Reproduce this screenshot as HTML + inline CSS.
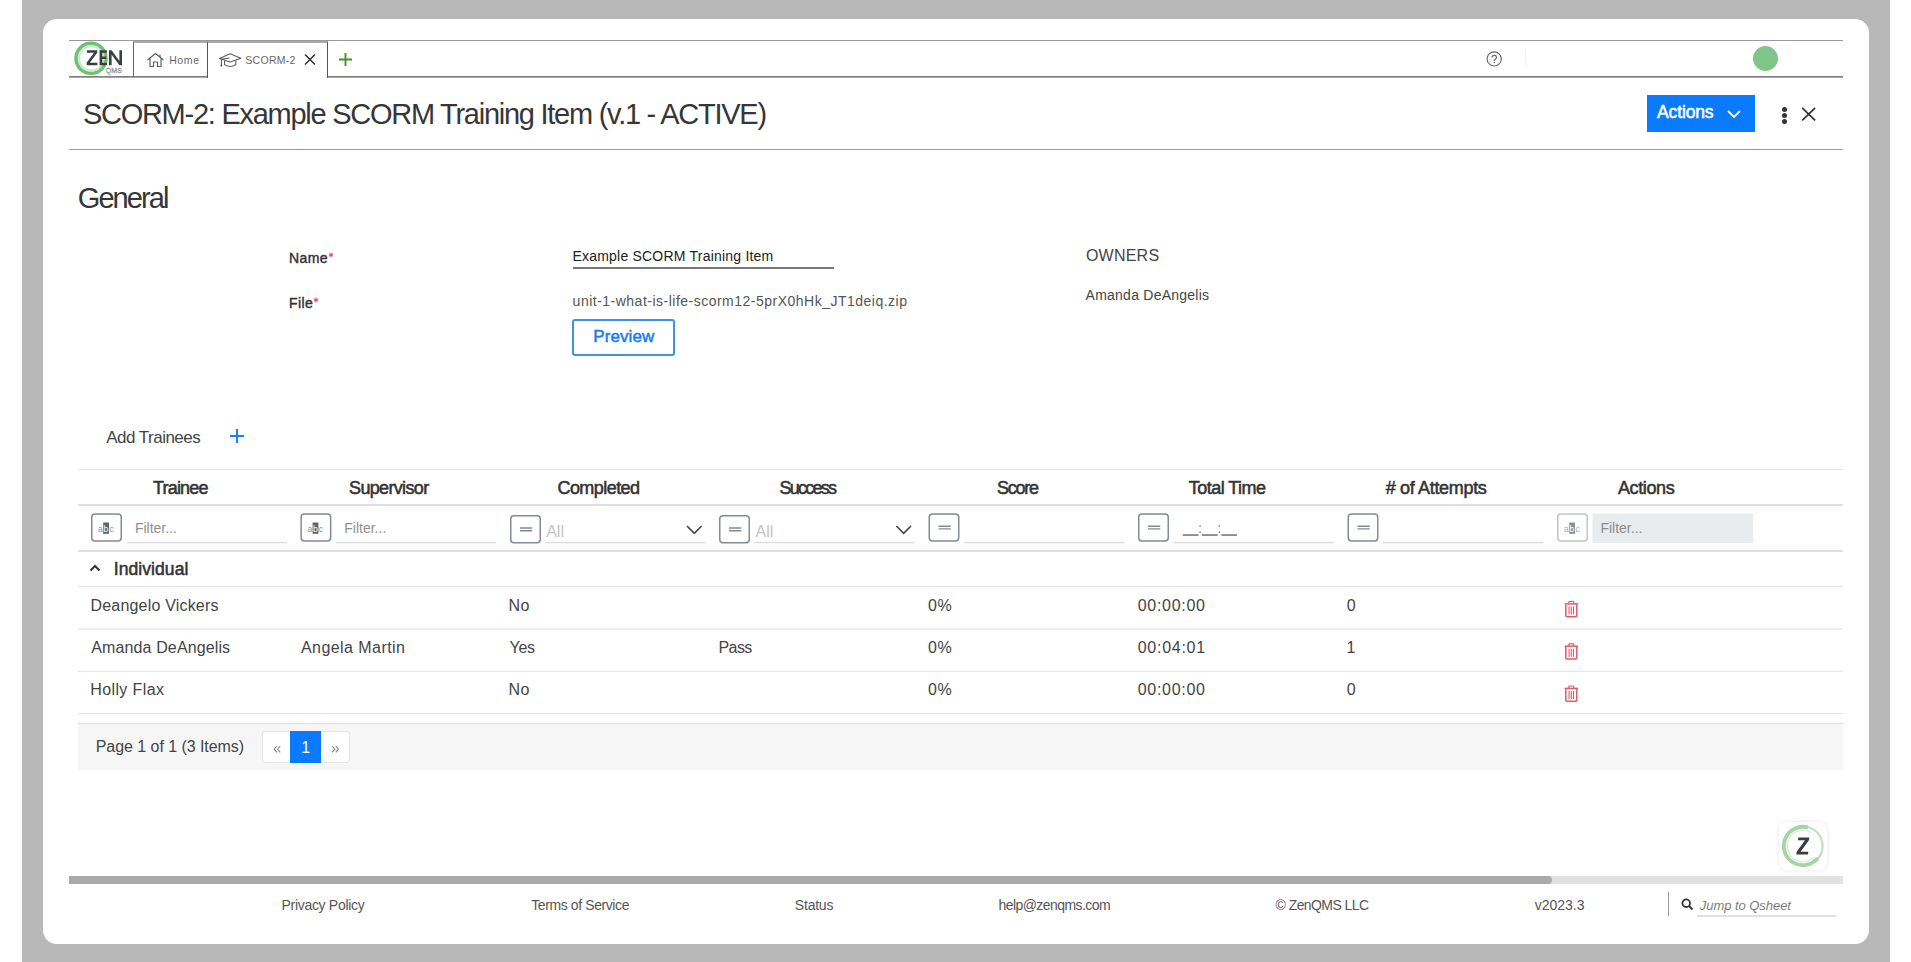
<!DOCTYPE html>
<html><head><meta charset="utf-8"><style>
html,body{margin:0;padding:0;width:1911px;height:962px;overflow:hidden;background:#fff;}
body{position:relative;font-family:"Liberation Sans",sans-serif;}
.t{position:absolute;line-height:1;white-space:nowrap;}
.a{position:absolute;}
</style></head><body>
<!-- outer background -->
<div class="a" style="left:22px;top:0;width:1868px;height:962px;background:#b8b8b8;"></div>
<div class="a" style="left:43px;top:19px;width:1826px;height:925px;background:#fff;border-radius:14px;"></div>
<!-- top bar lines -->
<div class="a" style="left:69px;top:40px;width:1774px;height:1px;background:#9a9a9a;"></div>
<div class="a" style="left:69px;top:76px;width:1774px;height:1px;background:#808080;"></div>
<div class="a" style="left:69px;top:77px;width:1774px;height:1px;background:#a6a6a6;"></div>
<!-- tabs -->
<div class="a" style="left:133px;top:41px;width:74px;height:36px;border-top:2px solid #aaa;border-left:1px solid #666;box-sizing:border-box;"></div>
<div class="a" style="left:207px;top:41px;width:121px;height:37px;background:#fff;border-top:2px solid #aaa;border-left:1px solid #555;border-right:1px solid #555;box-sizing:border-box;"></div>
<!-- logo -->
<svg class="a" style="left:68px;top:38px" width="64" height="40" viewBox="0 0 64 40">
  <circle cx="23" cy="20.3" r="15" fill="none" stroke="#6dc173" stroke-width="3.5"/>
  <circle cx="23.3" cy="20.3" r="12.2" fill="none" stroke="#c9e8c9" stroke-width="2.2"/>
  <g fill="#3b3f42">
    <path d="M18.9,12.3 H29.2 V14.7 L21.8,24.7 H29.4 V27.2 H18.6 V24.8 L26,14.8 H18.9 Z"/>
    <path d="M31.6,12.3 H38.9 V14.7 H34.2 V18.5 H38.3 V20.9 H34.2 V24.8 H38.9 V27.2 H31.6 Z"/>
    <path d="M41,27.2 V12.3 H43.6 L51.4,23 V12.3 H54 V27.2 H51.4 L43.6,16.5 V27.2 Z"/>
  </g>
  <text x="37.8" y="34.9" font-family="Liberation Sans" font-size="8" fill="none" stroke="#8a8a8a" stroke-width="0.45" textLength="16.2" lengthAdjust="spacingAndGlyphs">QMS</text>
</svg>
<!-- home icon -->
<svg class="a" style="left:146px;top:52px" width="19" height="16" viewBox="0 0 19 16">
  <path d="M1.5 8 L9.5 1.5 L17.5 8 M4 6 V14.5 H7.5 V10 H11.5 V14.5 H15 V6" fill="none" stroke="#5a5a5a" stroke-width="1.1" stroke-linejoin="round"/>
  <path d="M14 2.5 V5" stroke="#5a5a5a" stroke-width="1.1"/>
</svg>
<!-- scorm cap icon -->
<svg class="a" style="left:218px;top:52px" width="24" height="17" viewBox="0 0 24 17">
  <path d="M1.4 6.4 L12.1 1.8 L22.8 6.2 L12.1 10 Z" fill="none" stroke="#5f5f5f" stroke-width="1.1" stroke-linejoin="round"/>
  <path d="M6.6 8.3 V12.6 Q12.1 16.4 17.8 12.6 V8.3" fill="none" stroke="#5f5f5f" stroke-width="1.1"/>
  <path d="M11.5 6 L3.4 7.2 V13.6" fill="none" stroke="#5f5f5f" stroke-width="1.1"/>
  <circle cx="3.4" cy="13.6" r="0.9" fill="#444"/>
</svg>
<!-- tab close X -->
<svg class="a" style="left:304px;top:54px" width="12" height="11" viewBox="0 0 12 11">
  <path d="M1 0.5 L11 10.5 M11 0.5 L1 10.5" stroke="#333" stroke-width="1.5"/>
</svg>
<!-- plus -->
<svg class="a" style="left:338px;top:52px" width="15" height="15" viewBox="0 0 15 15">
  <path d="M7.5 1 V14 M1 7.5 H14" stroke="#4d8d2d" stroke-width="1.9"/>
</svg>
<!-- help icon -->
<svg class="a" style="left:1485px;top:50px" width="18" height="18" viewBox="0 0 18 18">
  <circle cx="9.2" cy="8.9" r="7.1" fill="none" stroke="#6a6a6a" stroke-width="1.15"/>
  <path d="M7 7.5 Q7 5.4 9.2 5.4 Q11.5 5.4 11.5 7.3 Q11.5 8.5 10 9.4 Q9.2 9.9 9.2 11" fill="none" stroke="#6a6a6a" stroke-width="1.15"/>
  <circle cx="9.2" cy="12.6" r="0.75" fill="#6a6a6a"/>
</svg>
<div class="a" style="left:1525px;top:50px;width:1px;height:17px;background:#f0f0f0;"></div>
<!-- green avatar -->
<div class="a" style="left:1753px;top:46px;width:25px;height:25px;border-radius:50%;background:#80c68a;"></div>
<!-- header line -->
<div class="a" style="left:69px;top:149px;width:1774px;height:1px;background:#9a9a9a;"></div>
<!-- actions button -->
<div class="a" style="left:1647px;top:95px;width:108px;height:37px;background:#0a7bff;"></div>
<svg class="a" style="left:1726px;top:108px" width="16" height="12" viewBox="0 0 16 12">
  <path d="M2 3 L8 9 L14 3" fill="none" stroke="#fff" stroke-width="1.8"/>
</svg>
<!-- kebab -->
<div class="a" style="left:1782px;top:106.5px;width:5px;height:5px;border-radius:50%;background:#333;"></div>
<div class="a" style="left:1782px;top:112.5px;width:5px;height:5px;border-radius:50%;background:#333;"></div>
<div class="a" style="left:1782px;top:119px;width:5px;height:5px;border-radius:50%;background:#333;"></div>
<svg class="a" style="left:1800px;top:106px" width="17" height="16" viewBox="0 0 17 16">
  <path d="M2.2 1.8 L15.1 14.3 M15.1 1.8 L2.2 14.3" stroke="#333" stroke-width="1.7"/>
</svg>
<!-- name underline -->
<div class="a" style="left:573px;top:267px;width:261px;height:2px;background:#777;"></div>
<!-- required asterisks -->
<svg class="a" style="left:328px;top:252px" width="6" height="6" viewBox="0 0 6 6"><path d="M3 0.5V5.5M0.8 1.8L5.2 4.2M5.2 1.8L0.8 4.2" stroke="#e0405a" stroke-width="1"/></svg>
<svg class="a" style="left:313px;top:297px" width="6" height="6" viewBox="0 0 6 6"><path d="M3 0.5V5.5M0.8 1.8L5.2 4.2M5.2 1.8L0.8 4.2" stroke="#e0405a" stroke-width="1"/></svg>
<!-- preview button -->
<div class="a" style="left:572px;top:319px;width:103px;height:37px;border:2px solid #3f8ef5;border-radius:3px;box-sizing:border-box;"></div>
<!-- add trainees plus -->
<svg class="a" style="left:229px;top:428px" width="16" height="16" viewBox="0 0 16 16">
  <path d="M8 1 V15 M1 8 H15" stroke="#1a7fff" stroke-width="2"/>
</svg>
<!-- table lines -->
<div class="a" style="left:78px;top:469px;width:1765px;height:1px;background:#e3e6ea;"></div>
<div class="a" style="left:78px;top:504px;width:1765px;height:2px;background:#dcdfe3;"></div>
<div class="a" style="left:78px;top:550px;width:1765px;height:2px;background:#dcdfe3;"></div>
<svg class="a" style="left:0;top:0" width="1911" height="962"><g fill="#e1e4e8">
<rect x="78" y="586.1" width="1765" height="1.1"/><rect x="78" y="628.4" width="1765" height="1.1"/><rect x="78" y="670.7" width="1765" height="1.1"/><rect x="78" y="713" width="1765" height="1.1"/></g></svg>
<!-- pager bar -->
<div class="a" style="left:78px;top:723px;width:1765px;height:47px;background:#f6f6f7;border-top:1px solid #dedede;box-sizing:border-box;"></div>
<div class="a" style="left:262px;top:731px;width:88px;height:32px;background:#fff;border:1px solid #e3e5e8;border-radius:3px;box-sizing:border-box;"></div>
<div class="a" style="left:290px;top:731px;width:31px;height:32px;background:#0a7bff;"></div>
<svg class="a" style="left:0;top:0" width="1911" height="962"><path d="M276.8,746 L274.2,749.2 L276.8,752.4 M280.2,746 L277.6,749.2 L280.2,752.4 M332.2,746 L334.8,749.2 L332.2,752.4 M335.8,746 L338.4,749.2 L335.8,752.4" fill="none" stroke="#808080" stroke-width="1.05"/></svg>
<div class="t" style="left:301.3px;top:739.5px;font-size:16px;color:#fff;">1</div>
<!-- group caret -->
<svg class="a" style="left:89px;top:563px" width="12" height="9" viewBox="0 0 12 9">
  <path d="M1.5 7.5 L6 3 L10.5 7.5" fill="none" stroke="#333" stroke-width="2"/>
</svg>
<!-- scrollbar -->
<div class="a" style="left:69px;top:876px;width:1774px;height:8px;background:#e2e2e2;"></div>
<div class="a" style="left:69px;top:876px;width:1483px;height:8px;background:#a9a9a9;border-radius:0 4px 4px 0;"></div>
<!-- footer divider & search -->
<div class="a" style="left:1668px;top:892px;width:1px;height:24px;background:#999;"></div>
<svg class="a" style="left:1681px;top:898px" width="13" height="13" viewBox="0 0 13 13">
  <circle cx="5.2" cy="5.2" r="3.8" fill="none" stroke="#333" stroke-width="1.8"/>
  <path d="M8 8 L11.5 11.5" stroke="#333" stroke-width="2"/>
</svg>
<div class="a" style="left:1697px;top:915px;width:139px;height:2px;background:#e0e0e0;"></div>
<!-- Z bubble -->
<div class="a" style="left:1779px;top:822px;width:48px;height:48px;border-radius:8px;background:#fff;box-shadow:0 0 5px rgba(0,0,0,0.10);"></div>
<svg class="a" style="left:0;top:0" width="1911" height="962">
  <circle cx="1803" cy="846" r="19.6" fill="none" stroke="#b8ddb8" stroke-width="2"/>
  <path d="M1807.97,827.45 A19.2,19.2 0 1 0 1817.71,858.34" fill="none" stroke="#a6d4a6" stroke-width="3.8"/>
  <path d="M1810.90,832.32 A15.8,15.8 0 1 0 1814.17,857.17" fill="none" stroke="#dcefdc" stroke-width="1.6"/>
  <path d="M1798.4,837.5 H1809.4 L1808.9,840.2 L1800.6,851.8 H1808.4 L1807.9,854.5 H1796.2 L1796.7,851.8 L1805,840.2 H1797.9 Z" fill="#3a3d40"/>
</svg>
<!-- filter row -->
<svg class="a" style="left:0;top:0" width="1911" height="962" viewBox="0 0 1911 962">
  <defs>
    <g id="abc">
      <rect x="0.75" y="0.75" width="29.5" height="27" rx="3.2" fill="#fff" stroke="#858b92" stroke-width="1.5"/>
      <rect x="12.2" y="9.3" width="5.8" height="11.3" fill="#5d636a"/>
      <text x="7.0" y="18.6" font-family="Liberation Sans" font-size="8.5" fill="#8a9096">a</text>
      <text x="12.6" y="18.6" font-family="Liberation Sans" font-size="8.5" fill="#fff">b</text>
      <text x="18.4" y="18.6" font-family="Liberation Sans" font-size="8.5" fill="#8a9096">c</text>
    </g>
    <g id="abc2">
      <rect x="0.75" y="0.75" width="29.5" height="27" rx="3.2" fill="#fff" stroke="#c0c5ca" stroke-width="1.5"/>
      <rect x="12.2" y="9.3" width="5.8" height="11.3" fill="#8a8f95"/>
      <text x="7.0" y="18.6" font-family="Liberation Sans" font-size="8.5" fill="#a5aaaf">a</text>
      <text x="12.6" y="18.6" font-family="Liberation Sans" font-size="8.5" fill="#fff">b</text>
      <text x="18.4" y="18.6" font-family="Liberation Sans" font-size="8.5" fill="#a5aaaf">c</text>
    </g>
    <g id="eq">
      <rect x="0.75" y="0.75" width="29.5" height="27" rx="3.2" fill="#fff" stroke="#858b92" stroke-width="1.5"/>
      <path d="M10 13 H22.3 M10 15.7 H22.3" stroke="#858b92" stroke-width="1.4"/>
    </g>
    <g id="trash">
      <path d="M0.8 3.4 H14.2" stroke="#e25a68" stroke-width="1.5"/>
      <path d="M5 3 V1.6 Q5 1 5.6 1 H9.4 Q10 1 10 1.6 V3" fill="none" stroke="#e25a68" stroke-width="1.2"/>
      <path d="M2 4 V15 Q2 16.2 3.2 16.2 H11.8 Q13 16.2 13 15 V4" fill="none" stroke="#e25a68" stroke-width="1.5"/>
      <path d="M5.3 6 V14 M7.5 6 V14 M9.7 6 V14" stroke="#e25a68" stroke-width="1.1"/>
    </g>
  </defs>
  <use href="#abc" x="91" y="513.2"/>
  <use href="#abc" x="300.4" y="513.2"/>
  <use href="#eq" x="510" y="515"/>
  <use href="#eq" x="719" y="515"/>
  <use href="#eq" x="928.5" y="513.2"/>
  <use href="#eq" x="1138" y="513.2"/>
  <use href="#eq" x="1347.5" y="513.2"/>
  <use href="#abc2" x="1557" y="513.2"/>
  <!-- underlines -->
  <g fill="#dcdddf">
    <rect x="127" y="541.8" width="160" height="1.5"/>
    <rect x="336" y="541.8" width="160" height="1.5"/>
    <rect x="545.5" y="541.8" width="160" height="1.5"/>
    <rect x="754.5" y="541.8" width="160" height="1.5"/>
    <rect x="964" y="541.8" width="160.5" height="1.5"/>
    <rect x="1173.5" y="541.8" width="160.5" height="1.5"/>
    <rect x="1383" y="541.8" width="160.5" height="1.5"/>
  </g>
  <rect x="1592.5" y="513.5" width="160.5" height="29.5" fill="#e9ecef"/>
  <!-- chevrons -->
  <path d="M687 526 L694.3 533.3 L701.6 526" fill="none" stroke="#444" stroke-width="1.6"/>
  <path d="M896.4 526 L903.7 533.3 L911 526" fill="none" stroke="#444" stroke-width="1.6"/>
  <!-- time mask -->
  <g fill="#707070">
    <rect x="1182.8" y="534.3" width="15.7" height="1.5"/>
    <rect x="1201.8" y="534.3" width="15.9" height="1.5"/>
    <rect x="1221.3" y="534.3" width="15.6" height="1.5"/>
    <rect x="1199.4" y="525.3" width="1.4" height="1.4"/><rect x="1199.4" y="531.5" width="1.4" height="1.4"/>
    <rect x="1218.7" y="525.3" width="1.4" height="1.4"/><rect x="1218.7" y="531.5" width="1.4" height="1.4"/>
  </g>
  <use href="#trash" x="1563.8" y="600.5"/>
  <use href="#trash" x="1563.8" y="642.8"/>
  <use href="#trash" x="1563.8" y="685"/>
</svg>

<div class="t" style="left:82.89px;top:100.25px;font-size:29px;font-weight:400;color:#363636;font-style:normal;letter-spacing:-1.260px;">SCORM-2: Example SCORM Training Item (v.1 - ACTIVE)</div>
<div class="t" style="left:77.74px;top:183.75px;font-size:29px;font-weight:400;color:#363636;font-style:normal;letter-spacing:-1.900px;">General</div>
<div class="t" style="left:288.91px;top:250.85px;font-size:14px;font-weight:400;-webkit-text-stroke:0.42px #333;color:#333;font-style:normal;letter-spacing:0.460px;">Name</div>
<div class="t" style="left:288.91px;top:295.75px;font-size:14px;font-weight:400;-webkit-text-stroke:0.42px #333;color:#333;font-style:normal;letter-spacing:0.460px;">File</div>
<div class="t" style="left:572.41px;top:249.35px;font-size:14px;font-weight:400;color:#222;font-style:normal;letter-spacing:0.215px;">Example SCORM Training Item</div>
<div class="t" style="left:572.62px;top:294.05px;font-size:14px;font-weight:400;color:#555;font-style:normal;letter-spacing:0.492px;">unit-1-what-is-life-scorm12-5prX0hHk_JT1deiq.zip</div>
<div class="t" style="left:593.27px;top:328.11px;font-size:17px;font-weight:400;-webkit-text-stroke:0.51px #1a7bf0;color:#1a7bf0;font-style:normal;letter-spacing:0.091px;">Preview</div>
<div class="t" style="left:1085.95px;top:247.85px;font-size:16px;font-weight:400;color:#444;font-style:normal;letter-spacing:0.224px;">OWNERS</div>
<div class="t" style="left:1085.60px;top:288.25px;font-size:14px;font-weight:400;color:#444;font-style:normal;letter-spacing:0.239px;">Amanda DeAngelis</div>
<div class="t" style="left:106.30px;top:428.71px;font-size:17px;font-weight:400;color:#444;font-style:normal;letter-spacing:-0.523px;">Add Trainees</div>
<div class="t" style="left:153.02px;top:478.56px;font-size:18px;font-weight:400;-webkit-text-stroke:0.54px #333;color:#333;font-style:normal;letter-spacing:-0.815px;">Trainee</div>
<div class="t" style="left:349.04px;top:478.56px;font-size:18px;font-weight:400;-webkit-text-stroke:0.54px #333;color:#333;font-style:normal;letter-spacing:-0.658px;">Supervisor</div>
<div class="t" style="left:557.46px;top:478.56px;font-size:18px;font-weight:400;-webkit-text-stroke:0.54px #333;color:#333;font-style:normal;letter-spacing:-0.554px;">Completed</div>
<div class="t" style="left:779.44px;top:478.56px;font-size:18px;font-weight:400;-webkit-text-stroke:0.54px #333;color:#333;font-style:normal;letter-spacing:-1.740px;">Success</div>
<div class="t" style="left:996.94px;top:478.56px;font-size:18px;font-weight:400;-webkit-text-stroke:0.54px #333;color:#333;font-style:normal;letter-spacing:-1.267px;">Score</div>
<div class="t" style="left:1188.82px;top:478.56px;font-size:18px;font-weight:400;-webkit-text-stroke:0.54px #333;color:#333;font-style:normal;letter-spacing:-0.531px;">Total Time</div>
<div class="t" style="left:1385.70px;top:478.56px;font-size:18px;font-weight:400;-webkit-text-stroke:0.54px #333;color:#333;font-style:normal;letter-spacing:-0.327px;"># of Attempts</div>
<div class="t" style="left:1618.00px;top:478.56px;font-size:18px;font-weight:400;-webkit-text-stroke:0.54px #333;color:#333;font-style:normal;letter-spacing:-0.384px;">Actions</div>
<div class="t" style="left:113.83px;top:561.38px;font-size:17.5px;font-weight:400;-webkit-text-stroke:0.53px #333;color:#333;font-style:normal;letter-spacing:0.062px;">Individual</div>
<div class="t" style="left:90.45px;top:597.65px;font-size:16px;font-weight:400;color:#444;font-style:normal;letter-spacing:0.196px;">Deangelo Vickers</div>
<div class="t" style="left:508.45px;top:597.65px;font-size:16px;font-weight:400;color:#444;font-style:normal;letter-spacing:0.600px;">No</div>
<div class="t" style="left:928.10px;top:597.65px;font-size:16px;font-weight:400;color:#444;font-style:normal;letter-spacing:0.552px;">0%</div>
<div class="t" style="left:1137.70px;top:597.65px;font-size:16px;font-weight:400;color:#444;font-style:normal;letter-spacing:0.702px;">00:00:00</div>
<div class="t" style="left:1346.70px;top:597.65px;font-size:16px;font-weight:400;color:#444;font-style:normal;letter-spacing:0.000px;">0</div>
<div class="t" style="left:91.30px;top:640.25px;font-size:16px;font-weight:400;color:#444;font-style:normal;letter-spacing:0.122px;">Amanda DeAngelis</div>
<div class="t" style="left:301.00px;top:640.25px;font-size:16px;font-weight:400;color:#444;font-style:normal;letter-spacing:0.432px;">Angela Martin</div>
<div class="t" style="left:509.45px;top:640.25px;font-size:16px;font-weight:400;color:#444;font-style:normal;letter-spacing:-0.226px;">Yes</div>
<div class="t" style="left:718.55px;top:640.25px;font-size:16px;font-weight:400;color:#444;font-style:normal;letter-spacing:-0.600px;">Pass</div>
<div class="t" style="left:928.10px;top:640.25px;font-size:16px;font-weight:400;color:#444;font-style:normal;letter-spacing:0.552px;">0%</div>
<div class="t" style="left:1137.70px;top:640.25px;font-size:16px;font-weight:400;color:#444;font-style:normal;letter-spacing:0.738px;">00:04:01</div>
<div class="t" style="left:1346.50px;top:640.25px;font-size:16px;font-weight:400;color:#444;font-style:normal;letter-spacing:0.000px;">1</div>
<div class="t" style="left:90.25px;top:682.45px;font-size:16px;font-weight:400;color:#444;font-style:normal;letter-spacing:0.380px;">Holly Flax</div>
<div class="t" style="left:508.45px;top:682.45px;font-size:16px;font-weight:400;color:#444;font-style:normal;letter-spacing:0.600px;">No</div>
<div class="t" style="left:928.10px;top:682.45px;font-size:16px;font-weight:400;color:#444;font-style:normal;letter-spacing:0.552px;">0%</div>
<div class="t" style="left:1137.70px;top:682.45px;font-size:16px;font-weight:400;color:#444;font-style:normal;letter-spacing:0.702px;">00:00:00</div>
<div class="t" style="left:1346.70px;top:682.45px;font-size:16px;font-weight:400;color:#444;font-style:normal;letter-spacing:0.000px;">0</div>
<div class="t" style="left:95.75px;top:739.15px;font-size:16px;font-weight:400;color:#444;font-style:normal;letter-spacing:-0.051px;">Page 1 of 1 (3 Items)</div>
<div class="t" style="left:281.51px;top:898.35px;font-size:14px;font-weight:400;color:#555;font-style:normal;letter-spacing:-0.303px;">Privacy Policy</div>
<div class="t" style="left:531.28px;top:898.35px;font-size:14px;font-weight:400;color:#555;font-style:normal;letter-spacing:-0.404px;">Terms of Service</div>
<div class="t" style="left:794.86px;top:898.35px;font-size:14px;font-weight:400;color:#555;font-style:normal;letter-spacing:-0.223px;">Status</div>
<div class="t" style="left:998.52px;top:898.35px;font-size:14px;font-weight:400;color:#555;font-style:normal;letter-spacing:-0.567px;">help@zenqms.com</div>
<div class="t" style="left:1275.60px;top:898.35px;font-size:14px;font-weight:400;color:#555;font-style:normal;letter-spacing:-0.573px;">© ZenQMS LLC</div>
<div class="t" style="left:1534.80px;top:898.35px;font-size:14px;font-weight:400;color:#555;font-style:normal;letter-spacing:-0.025px;">v2023.3</div>
<div class="t" style="left:1699.80px;top:898.69px;font-size:13px;font-weight:400;color:#7a7a7a;font-style:italic;letter-spacing:-0.048px;">Jump to Qsheet</div>
<div class="t" style="left:1657.10px;top:104.28px;font-size:17.5px;font-weight:400;-webkit-text-stroke:0.53px #fff;color:#fff;font-style:normal;letter-spacing:-0.144px;">Actions</div>
<div class="t" style="left:134.91px;top:521.25px;font-size:14px;font-weight:400;color:#909090;font-style:normal;letter-spacing:0.000px;">Filter...</div>
<div class="t" style="left:344.27px;top:521.25px;font-size:14px;font-weight:400;color:#909090;font-style:normal;letter-spacing:0.000px;">Filter...</div>
<div class="t" style="left:1600.41px;top:521.25px;font-size:14px;font-weight:400;color:#8c8c8c;font-style:normal;letter-spacing:0.000px;">Filter...</div>
<div class="t" style="left:546.20px;top:523.55px;font-size:16px;font-weight:400;color:#c4c4c4;font-style:normal;letter-spacing:0.000px;">All</div>
<div class="t" style="left:755.56px;top:523.55px;font-size:16px;font-weight:400;color:#c4c4c4;font-style:normal;letter-spacing:0.000px;">All</div>
<div class="t" style="left:169.18px;top:55.41px;font-size:10.5px;font-weight:400;color:#666;font-style:normal;letter-spacing:0.600px;">Home</div>
<div class="t" style="left:245.27px;top:55.41px;font-size:10.5px;font-weight:400;color:#666;font-style:normal;letter-spacing:0.289px;">SCORM-2</div>
</body></html>
